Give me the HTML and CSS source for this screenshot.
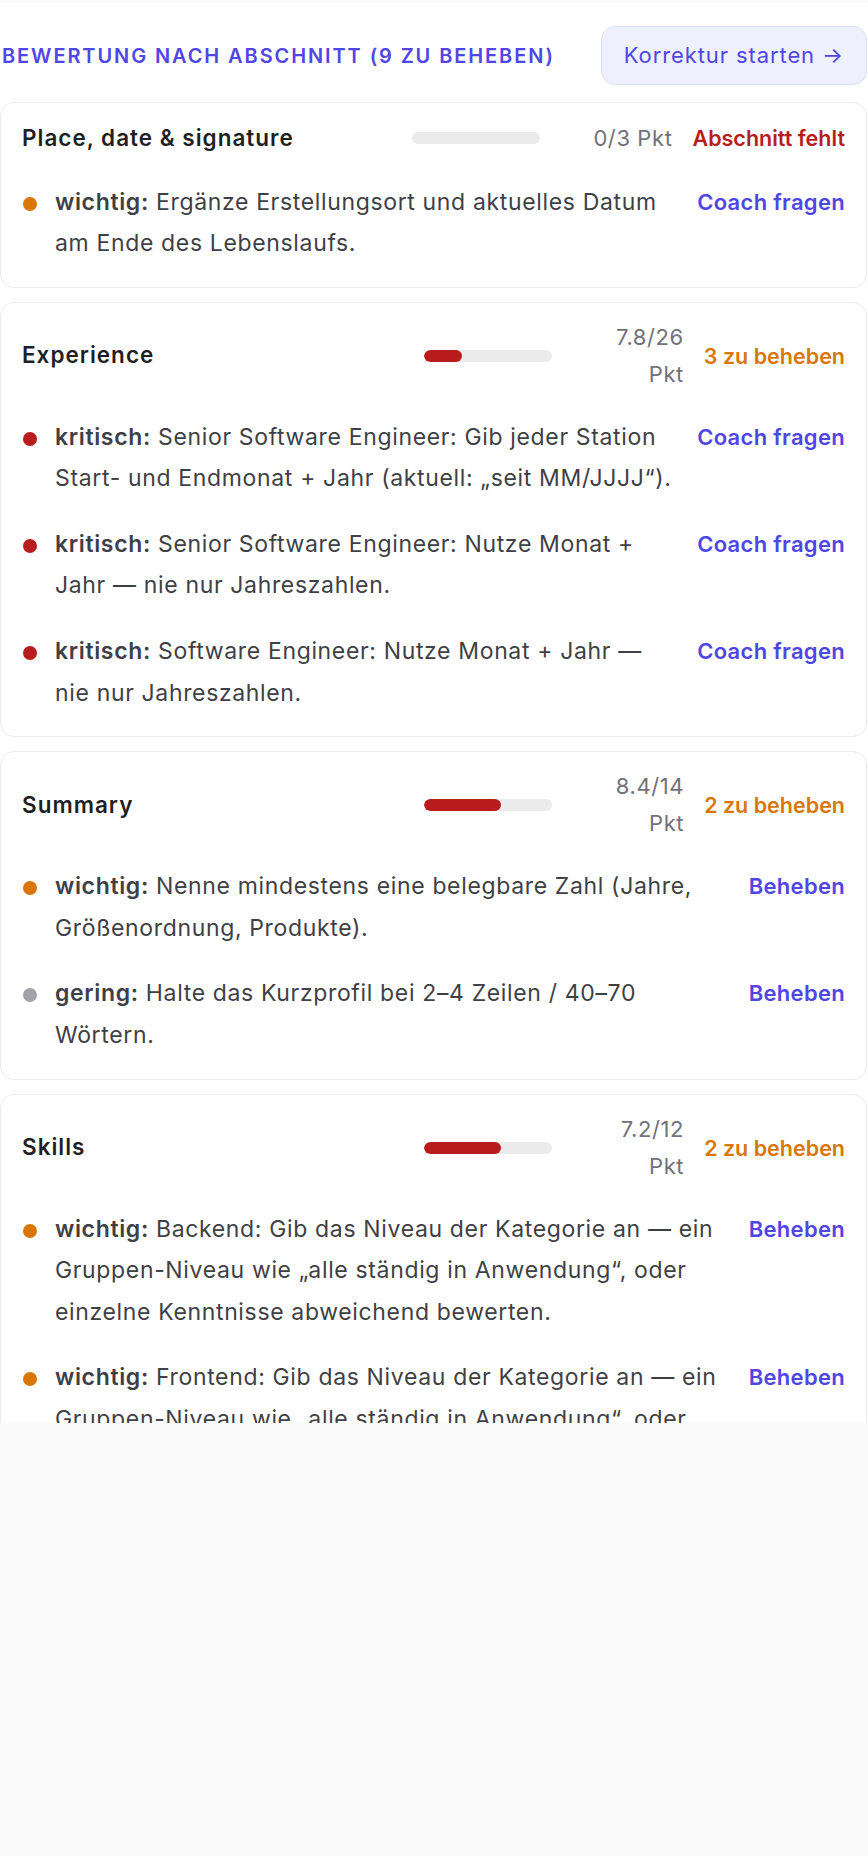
FILE: index.html
```html
<!DOCTYPE html>
<html lang="de">
<head>
  <meta charset="UTF-8">
  <meta name="viewport" content="width=device-width, initial-scale=1.0">
  <title>Bewertung nach Abschnitt</title>
  <link rel="stylesheet" href="styles.css">
</head>
<body>
  <div class="panel">
    <div class="panel-head">
      <h2 class="section-label">Bewertung nach Abschnitt (9 zu beheben)</h2>
      <button class="btn-start">Korrektur starten →</button>
    </div>

    <div class="section-list">
      <div class="section-card">
        <div class="section-head">
          <h3 class="section-title">Place, date &amp; signature</h3>
          <div class="bar"><div class="bar-fill" style="width: 0%"></div></div>
          <div class="score">0/3 Pkt</div>
          <div class="status missing">Abschnitt fehlt</div>
        </div>
        <ul class="issues">
          <li class="issue">
            <span class="dot medium"></span>
            <p class="issue-text"><strong>wichtig:</strong> Ergänze Erstellungsort und aktuelles Datum am&nbsp;Ende des Lebenslaufs.</p>
            <a class="issue-action" href="#">Coach fragen</a>
          </li>
        </ul>
      </div>

      <div class="section-card">
        <div class="section-head">
          <h3 class="section-title">Experience</h3>
          <div class="bar"><div class="bar-fill" style="width: 30%"></div></div>
          <div class="score">7.8/26 Pkt</div>
          <div class="status todo">3 zu beheben</div>
        </div>
        <ul class="issues">
          <li class="issue">
            <span class="dot high"></span>
            <p class="issue-text"><strong>kritisch:</strong> Senior Software Engineer: Gib jeder Station <span class="nowrap">Start-</span> und Endmonat + Jahr (aktuell: „seit MM/JJJJ“).</p>
            <a class="issue-action" href="#">Coach fragen</a>
          </li>
          <li class="issue">
            <span class="dot high"></span>
            <p class="issue-text"><strong>kritisch:</strong> Senior Software Engineer: Nutze Monat + Jahr — nie nur Jahreszahlen.</p>
            <a class="issue-action" href="#">Coach fragen</a>
          </li>
          <li class="issue">
            <span class="dot high"></span>
            <p class="issue-text"><strong>kritisch:</strong> Software Engineer: Nutze Monat + Jahr — nie nur Jahreszahlen.</p>
            <a class="issue-action" href="#">Coach fragen</a>
          </li>
        </ul>
      </div>

      <div class="section-card">
        <div class="section-head">
          <h3 class="section-title">Summary</h3>
          <div class="bar"><div class="bar-fill" style="width: 60%"></div></div>
          <div class="score">8.4/14 Pkt</div>
          <div class="status todo">2 zu beheben</div>
        </div>
        <ul class="issues">
          <li class="issue">
            <span class="dot medium"></span>
            <p class="issue-text"><strong>wichtig:</strong> Nenne mindestens eine belegbare Zahl (Jahre, Größenordnung, Produkte).</p>
            <a class="issue-action" href="#">Beheben</a>
          </li>
          <li class="issue">
            <span class="dot low"></span>
            <p class="issue-text"><strong>gering:</strong> Halte das Kurzprofil bei 2–4 Zeilen / 40–70 Wörtern.</p>
            <a class="issue-action" href="#">Beheben</a>
          </li>
        </ul>
      </div>

      <div class="section-card">
        <div class="section-head">
          <h3 class="section-title">Skills</h3>
          <div class="bar"><div class="bar-fill" style="width: 60%"></div></div>
          <div class="score">7.2/12 Pkt</div>
          <div class="status todo">2 zu beheben</div>
        </div>
        <ul class="issues">
          <li class="issue">
            <span class="dot medium"></span>
            <p class="issue-text"><strong>wichtig:</strong> Backend: Gib das Niveau der Kategorie an — ein <span class="nowrap">Gruppen-Niveau</span> wie „alle ständig in Anwendung“, oder einzelne Kenntnisse abweichend bewerten.</p>
            <a class="issue-action" href="#">Beheben</a>
          </li>
          <li class="issue">
            <span class="dot medium"></span>
            <p class="issue-text"><strong>wichtig:</strong> Frontend: Gib das Niveau der Kategorie an — ein <span class="nowrap">Gruppen-Niveau</span> wie „alle ständig in Anwendung“, oder einzelne Kenntnisse abweichend bewerten.</p>
            <a class="issue-action" href="#">Beheben</a>
          </li>
        </ul>
      </div>
    </div>
  </div>
</body>
</html>
```

FILE: styles.css
```css
body {
  margin: 0;
  background: #fafafa;
  font-family: 'Inter', 'Liberation Sans', sans-serif;
  color: #3f3f46;
}
.panel {
  margin-top: 3px;
  height: 1420px;
  overflow: hidden;
  background: #fff;
  padding: 23px 1px 0 0;
  box-sizing: border-box;
}
.panel-head {
  display: flex;
  align-items: center;
  justify-content: space-between;
  padding-left: 2px;
}
.section-label {
  margin: 0;
  font-size: 20px;
  font-weight: 600;
  letter-spacing: 1.9px;
  text-transform: uppercase;
  color: #4f46e5;
}
.btn-start {
  font-family: inherit;
  font-size: 22px;
  line-height: 31px;
  letter-spacing: 0.9px;
  padding: 13px 22px;
  border: 1px solid #dcdffb;
  border-radius: 14px;
  background: #eef0fe;
  color: #4f46e5;
}
.section-list {
  margin-top: 17px;
  display: flex;
  flex-direction: column;
  gap: 14px;
}
.section-card {
  border: 1px solid #ebebeb;
  border-radius: 14px;
  padding: 16px 21px 22px;
  background: #fff;
}
.section-head {
  display: flex;
  align-items: center;
}
.section-title {
  flex: 1;
  margin: 0;
  font-size: 22.5px;
  line-height: 38.5px;
  letter-spacing: 1px;
  font-weight: 600;
  color: #1f1f23;
}
.bar {
  width: 128px;
  height: 12px;
  border-radius: 6px;
  background: #ebebeb;
  overflow: hidden;
  margin-right: 52px;
}
.bar-fill {
  height: 100%;
  border-radius: 6px;
  background: #b91c1c;
}
.score {
  width: 80px;
  text-align: right;
  font-size: 22px;
  line-height: 37px;
  letter-spacing: 0.6px;
  color: #71717a;
  margin-right: 20px;
}
.status {
  font-size: 21.5px;
  font-weight: 600;
}
.status.missing { color: #b91c1c; }
.status.todo { color: #d97706; }
.issues {
  list-style: none;
  margin: 24px 0 0;
  padding: 0;
  display: flex;
  flex-direction: column;
  gap: 24px;
}
.issue {
  display: flex;
  align-items: flex-start;
}
.dot {
  flex: none;
  width: 14px;
  height: 14px;
  border-radius: 50%;
  margin: 15px 18px 0 1px;
}
.dot.high { background: #b91c1c; }
.dot.medium { background: #d97706; }
.dot.low { background: #a1a1aa; }
.issue-text {
  flex: 1;
  margin: 0 15px 0 0;
  font-size: 23px;
  line-height: 41.6px;
  letter-spacing: 0.65px;
}
.issue-text strong {
  font-weight: 600;
  color: #3f3f46;
}
.nowrap {
  white-space: nowrap;
}
.issue-action {
  font-size: 22px;
  line-height: 41.6px;
  font-weight: 600;
  letter-spacing: 0.3px;
  color: #4f46e5;
  text-decoration: none;
  white-space: nowrap;
}
```
